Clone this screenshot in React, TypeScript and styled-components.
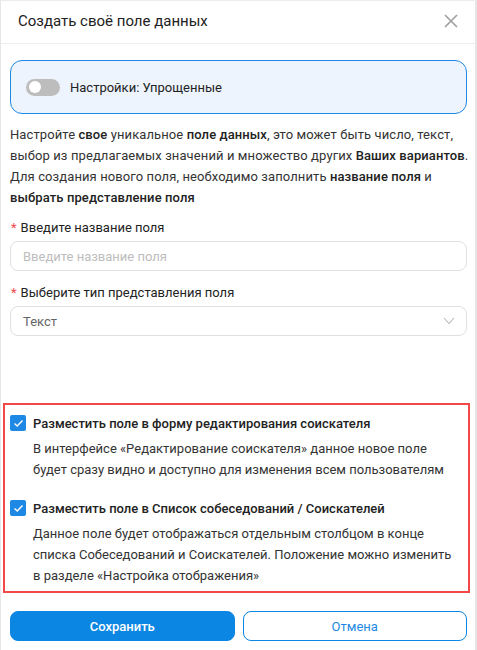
import React from "react";
import styled, { createGlobalStyle } from "styled-components";

const Global = createGlobalStyle`
  html, body { margin: 0; padding: 0; background: #fff; }
  body { font-family: Roboto, "Noto Sans", Arial, sans-serif; color: #222; }
  * { box-sizing: border-box; }
`;

const Dialog = styled.div`
  width: 477px;
  height: 650px;
  display: flex;
  flex-direction: column;
  border-left: 1px solid #e6e6e6;
  border-right: 2px solid #e6e6e6;
  border-top: 1px solid #ececec;
  background: #fff;
`;

const Header = styled.div`
  height: 43px;
  flex: none;
  display: flex;
  align-items: center;
  justify-content: space-between;
  padding: 0 17px 3px 17px;
  border-bottom: 1px solid #eeeeee;
`;

const Title = styled.div`
  font-size: 15px;
  color: #222;
`;

const Close = styled.button`
  border: none;
  background: none;
  padding: 0;
  width: 14px;
  height: 14px;
  display: flex;
  align-items: center;
  justify-content: center;
  cursor: pointer;
`;

const Body = styled.div`
  flex: 1;
  display: flex;
  flex-direction: column;
  padding: 16px 8px 9px 9px;
`;

const InfoBox = styled.div`
  height: 54px;
  flex: none;
  display: flex;
  align-items: center;
  gap: 10px;
  padding: 0 15px;
  border: 1px solid #1e88e5;
  border-radius: 12px;
  background: #edf4fd;
  font-size: 13px;
  color: #222;
`;

const Toggle = styled.span`
  width: 34px;
  height: 17px;
  border-radius: 9px;
  background: #bdbdbd;
  position: relative;
  flex: none;
  &::after {
    content: "";
    position: absolute;
    left: 2.5px;
    top: 2.5px;
    width: 12px;
    height: 12px;
    border-radius: 50%;
    background: #fff;
  }
`;

const Paragraph = styled.p`
  margin: 10px 0 0;
  font-size: 13px;
  letter-spacing: 0.1px;
  line-height: 21px;
  color: #333;
  white-space: nowrap;
  b { font-weight: 500; color: #222; }
`;

const Label = styled.div<{ $first?: boolean }>`
  margin-top: ${(p) => (p.$first ? "11px" : "13px")};
  font-size: 13px;
  color: #222;
  line-height: 18px;
  display: flex;
  gap: 4px;
  padding-left: 1px;
`;

const Star = styled.span`
  color: #f04a4a;
`;

const Field = styled.div<{ $muted?: boolean }>`
  margin-top: 4px;
  height: 30px;
  flex: none;
  border: 1px solid #e0e0e0;
  border-radius: 8px;
  display: flex;
  align-items: center;
  justify-content: space-between;
  padding: 0 11px 0 12px;
  font-size: 13px;
  color: ${(p) => (p.$muted ? "#bdbdbd" : "#666")};
`;

const Section = styled.div`
  margin: auto -3px 0 -7px;
  border: 2px solid #f24848;
  padding: 10px 8px 5px 5px;
  display: flex;
  flex-direction: column;
`;

const CheckRow = styled.div`
  display: grid;
  grid-template-columns: 16px 1fr;
  column-gap: 7px;
  & + & { margin-top: 20px; }
`;

const Check = styled.span`
  width: 16px;
  height: 16px;
  border-radius: 2px;
  background: #1e88e5;
  display: flex;
  align-items: center;
  justify-content: center;
`;

const CheckTitle = styled.div`
  font-size: 13px;
  font-weight: 500;
  color: #222;
  line-height: 17px;
`;

const CheckDesc = styled.div`
  grid-column: 2;
  margin-top: 6px;
  font-size: 13px;
  line-height: 21px;
  color: #333;
`;

const Buttons = styled.div`
  margin-top: 18px;
  display: grid;
  grid-template-columns: 1fr 1fr;
  gap: 8px;
`;

const Button = styled.button<{ $primary?: boolean }>`
  height: 30px;
  border-radius: 8px;
  font-family: Roboto, Arial, sans-serif;
  font-size: 13px;
  font-weight: ${(p) => (p.$primary ? 500 : 400)};
  border: 1px solid #0b86e3;
  background: ${(p) => (p.$primary ? "#0b86e3" : "#fff")};
  color: ${(p) => (p.$primary ? "#fff" : "#1e88e5")};
  cursor: pointer;
`;

const CheckIcon = () => (
  <svg width="11" height="9" viewBox="0 0 11 9">
    <path d="M1.5 4.5 L4.2 7 L9.5 1.5" stroke="#fff" strokeWidth="1.4" fill="none" />
  </svg>
);

export default function App() {
  return (
    <>
      <Global />
      <Dialog>
        <Header>
          <Title>Создать своё поле данных</Title>
          <Close aria-label="close">
            <svg width="14" height="14" viewBox="0 0 14 14">
              <path d="M1 1 L13 13 M13 1 L1 13" stroke="#9e9e9e" strokeWidth="1.6" />
            </svg>
          </Close>
        </Header>
        <Body>
          <InfoBox>
            <Toggle />
            <span>Настройки: Упрощенные</span>
          </InfoBox>
          <Paragraph>
            Настройте <b>свое</b> уникальное <b>поле данных</b>, это может быть число, текст,
            <br />
            выбор из предлагаемых значений и множество других <b>Ваших вариантов</b>.
            <br />
            Для создания нового поля, необходимо заполнить <b>название поля</b> и
            <br />
            <b>выбрать представление поля</b>
          </Paragraph>
          <Label $first>
            <Star>*</Star>
            <span>Введите название поля</span>
          </Label>
          <Field $muted>Введите название поля</Field>
          <Label>
            <Star>*</Star>
            <span>Выберите тип представления поля</span>
          </Label>
          <Field>
            <span>Текст</span>
            <svg width="12" height="8" viewBox="0 0 12 8">
              <path d="M1 1 L6 6.5 L11 1" stroke="#b8b8b8" strokeWidth="1.1" fill="none" />
            </svg>
          </Field>
          <Section>
            <CheckRow>
              <Check>
                <CheckIcon />
              </Check>
              <CheckTitle>Разместить поле в форму редактирования соискателя</CheckTitle>
              <CheckDesc>
                В интерфейсе «Редактирование соискателя» данное новое поле
                <br />
                будет сразу видно и доступно для изменения всем пользователям
              </CheckDesc>
            </CheckRow>
            <CheckRow>
              <Check>
                <CheckIcon />
              </Check>
              <CheckTitle>Разместить поле в Список собеседований / Соискателей</CheckTitle>
              <CheckDesc>
                Данное поле будет отображаться отдельным столбцом в конце
                <br />
                списка Собеседований и Соискателей. Положение можно изменить
                <br />в разделе «Настройка отображения»
              </CheckDesc>
            </CheckRow>
          </Section>
          <Buttons>
            <Button $primary>Сохранить</Button>
            <Button>Отмена</Button>
          </Buttons>
        </Body>
      </Dialog>
    </>
  );
}
